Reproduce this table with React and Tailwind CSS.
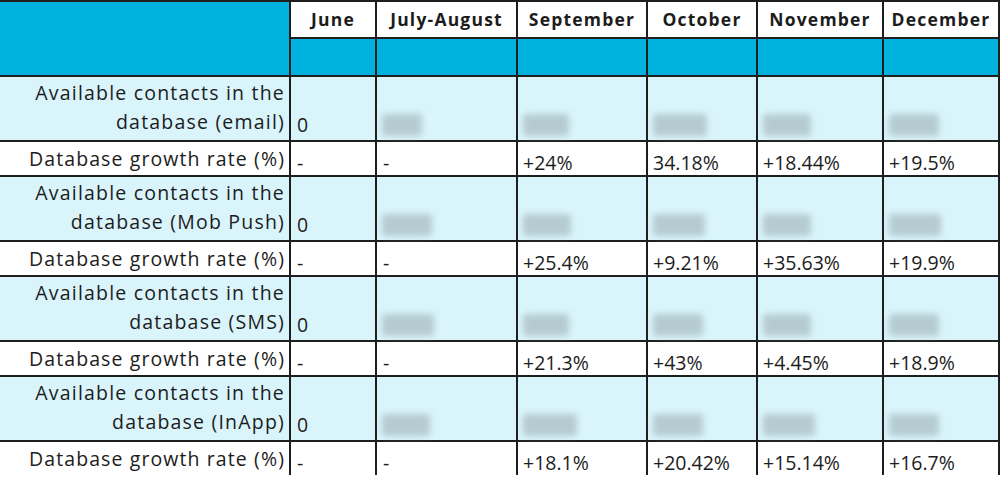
const months = ['June', 'July-August', 'September', 'October', 'November', 'December'];

// widths of the blurred (hidden) numbers, per contacts row, from July-August onward
const blobs = {
  email: [40, 46, 54, 48, 50],
  push: [50, 48, 52, 48, 52],
  sms: [52, 46, 50, 48, 50],
  inapp: [48, 54, 50, 52, 50],
};

const sections = [
  { key: 'email', label: 'database (email)', growth: ['+24%', '34.18%', '+18.44%', '+19.5%'] },
  { key: 'push', label: 'database (Mob Push)', growth: ['+25.4%', '+9.21%', '+35.63%', '+19.9%'] },
  { key: 'sms', label: 'database (SMS)', growth: ['+21.3%', '+43%', '+4.45%', '+18.9%'] },
  { key: 'inapp', label: 'database (InApp)', growth: ['+18.1%', '+20.42%', '+15.14%', '+16.7%'] },
];

const font = { fontFamily: '"Open Sans", "Noto Sans", sans-serif' };

const Blob = ({ w }) => (
  <div className="h-[22px] rounded-[3px] bg-[#a9bec3] blur-[3px] opacity-75" style={{ width: w }} />
);

export default function App() {
  return (
    <div className="h-[477px] w-[1000px] overflow-hidden bg-white text-[#1c1c1c]" style={font}>
      <div className="grid grid-cols-[289px_84px_139px_128px_108px_124px_114px] grid-rows-[35px_36px_63px_33px_63px_33px_63px_33px_63px_33px] gap-[2px] bg-[#1e1e1e] pt-[2px] pr-[2px]">
        {/* header */}
        <div className="row-span-2 bg-[#01b2df]" />
        {months.map((m) => (
          <div key={m} className="flex items-center justify-center bg-white text-[17.5px] font-bold tracking-[1.2px]">
            {m}
          </div>
        ))}
        {months.map((m) => (
          <div key={m + '-band'} className="bg-[#01b2df]" />
        ))}

        {sections.map((s) => (
          <>
            <div key={s.key + 'l'} className="flex flex-col items-end justify-end bg-[#d9f4fb] pr-[4px] pb-[4px] text-[19.5px] leading-[29px] tracking-[1.2px]">
              <span>Available contacts in the</span>
              <span>{s.label}</span>
            </div>
            <div key={s.key + 'z'} className="flex items-end bg-[#d9f4fb] pl-[6px] pb-[2px] text-[19.5px] leading-[26px]">
              0
            </div>
            {blobs[s.key].map((w, i) => (
              <div key={s.key + 'b' + i} className="flex items-end bg-[#d9f4fb] pl-[5px] pb-[4px]">
                <Blob w={w} />
              </div>
            ))}

            <div key={s.key + 'g'} className="flex items-end justify-end bg-white pr-[4px] text-[19.5px] leading-[33px] tracking-[1.1px]">
              Database growth rate (%)
            </div>
            <div key={s.key + 'd1'} className="flex items-end bg-white pl-[6px] text-[19.5px] leading-[25px]">-</div>
            <div key={s.key + 'd2'} className="flex items-end bg-white pl-[6px] text-[19.5px] leading-[25px]">-</div>
            {s.growth.map((g, i) => (
              <div key={s.key + 'v' + i} className="flex items-end bg-white pl-[5px] text-[19.5px] leading-[25px]">
                {g}
              </div>
            ))}
          </>
        ))}
      </div>
    </div>
  );
}
